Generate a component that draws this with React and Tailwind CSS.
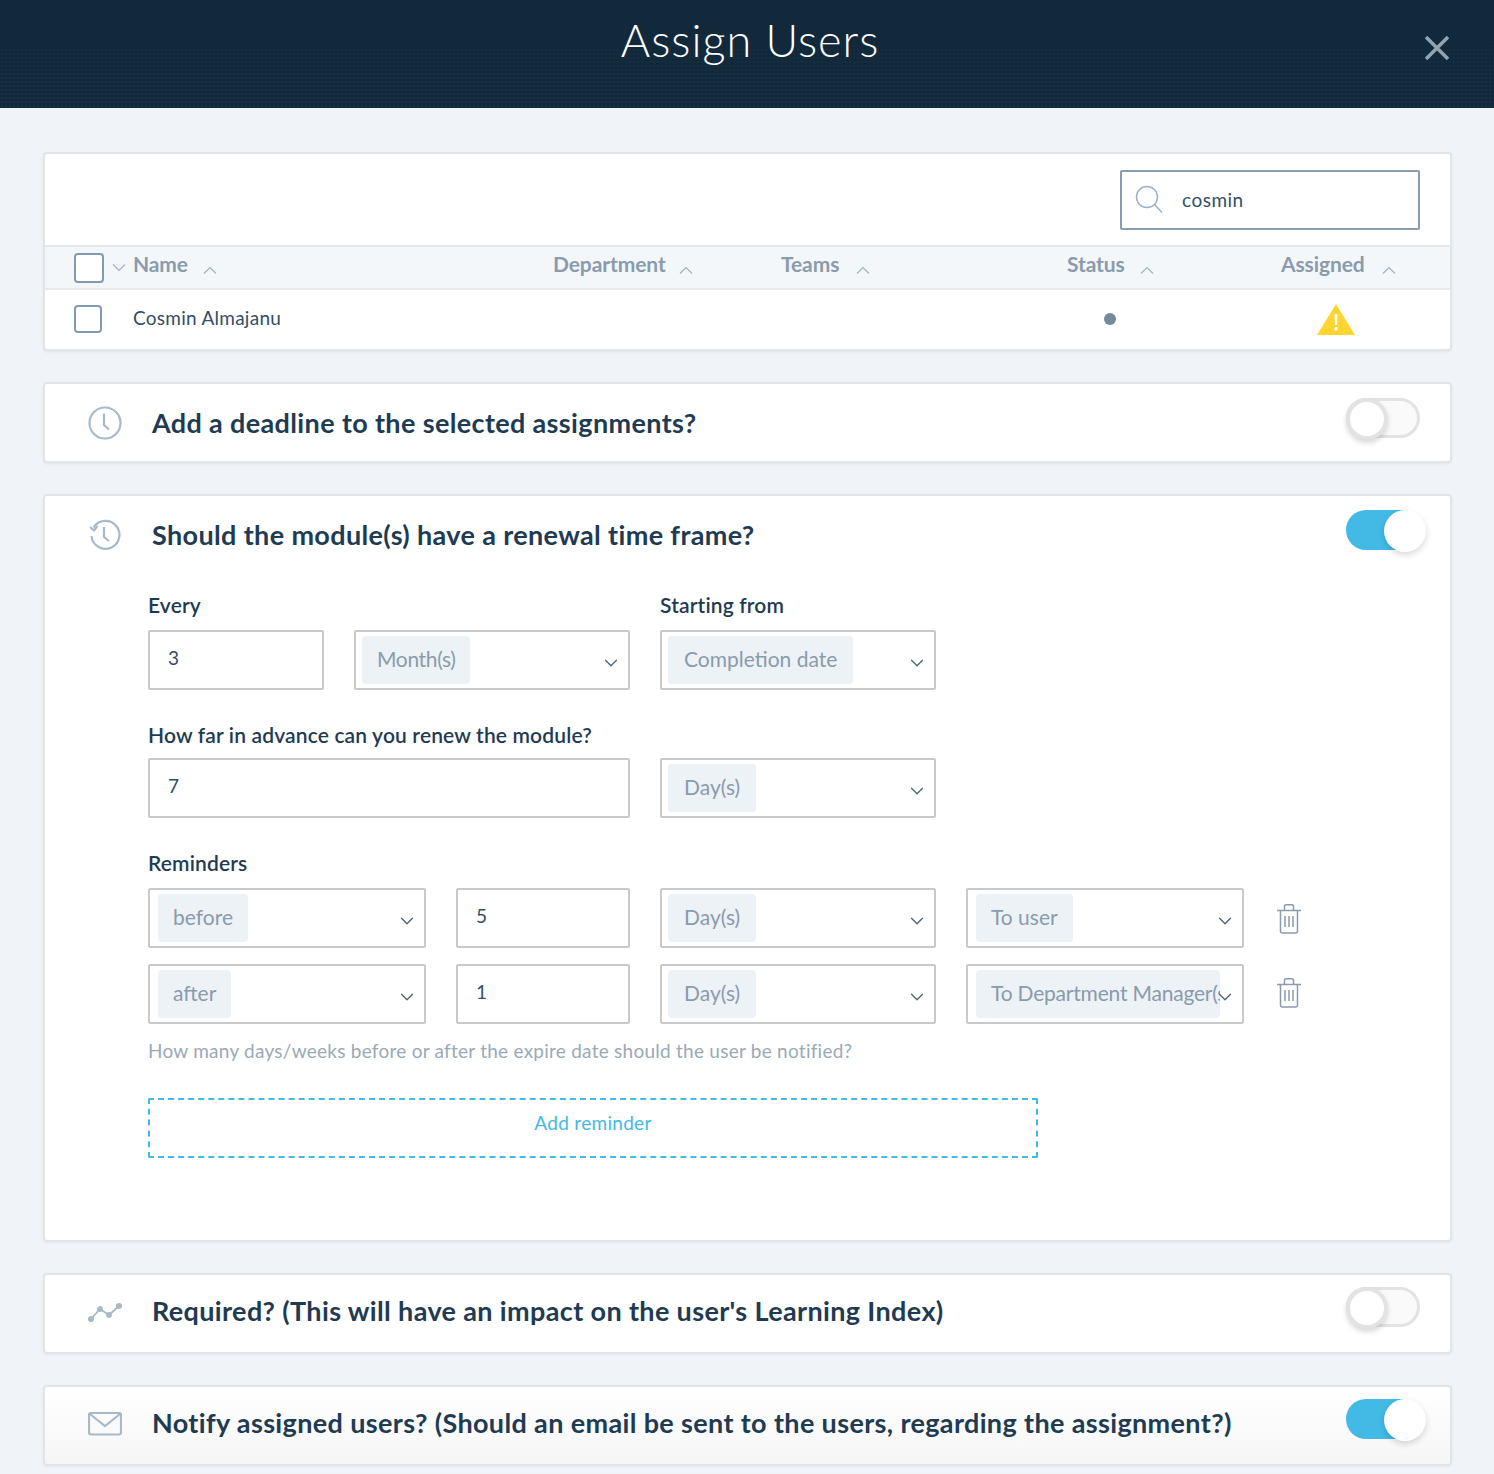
import { ChevronDown } from 'lucide-react'

const columns = [
  { label: 'Name', className: 'w-[420px]', caret: 'ml-[15px]' },
  { label: 'Department', className: 'w-[228px]', caret: 'ml-[13px]' },
  { label: 'Teams', className: 'w-[286px]', caret: 'ml-[17px]' },
  { label: 'Status', className: 'w-[214px]', caret: 'ml-[15px]' },
  { label: 'Assigned', className: '', caret: 'ml-[17px]' },
]

function Caret({ up, className }) {
  return (
    <svg viewBox="0 0 14 8" className={`h-2 w-[14px] text-[#9fb3c8] ${className}`} fill="none" stroke="currentColor" strokeWidth="1.200">
      <path d={up ? 'M1 7.500L7 1.500l6 6' : 'M1 .5l6 6 6-6'} />
    </svg>
  )
}

function SortHeader({ label, className, caret }) {
  return (
    <div className={`flex items-center ${className}`}>
      <span className="pb-[8px] font-bold text-[21px] leading-none tracking-[-0.1px] text-[#8a9bad]">{label}</span>
      <Caret up className={`mt-[5px] ${caret}`} />
    </div>
  )
}

function Toggle({ on }) {
  if (on) {
    return (
      <div className="relative h-10 w-[74px] rounded-full bg-[#43b9e6]">
        <div className="absolute -right-[6px] top-0 size-[42px] rounded-full bg-white shadow-[0_3px_6px_rgba(0,0,0,0.15)]" />
      </div>
    )
  }
  return (
    <div className="relative h-10 w-[74px] rounded-full border-[3px] border-[#e3e3e3] bg-[#fafafa]">
      <div className="absolute -left-[3px] -top-[3px] size-[42px] rounded-full border-[4px] border-[#e3e3e3] bg-white shadow-[0_3px_5px_rgba(0,0,0,0.15)]" />
    </div>
  )
}

function ClockIcon() {
  return (
    <svg viewBox="0 0 34 34" className="size-[34px] text-[#a9b9c8]" fill="none" stroke="currentColor" strokeWidth="2.200">
      <circle cx="17" cy="17" r="15.500" />
      <path d="M16 7.500V19l5 4.500" />
    </svg>
  )
}

function HistoryIcon() {
  return (
    <svg viewBox="0 0 34 34" className="size-[34px] text-[#a9b9c8]" fill="none" stroke="currentColor" strokeWidth="2.200">
      <path d="M5.500 9.500A14 14 0 1 1 3.500 18" />
      <path d="M2 9l4 3.500L9.500 8" />
      <path d="M16 9v10l5 4" />
    </svg>
  )
}

function TrendIcon() {
  return (
    <svg viewBox="0 0 34 20" className="h-5 w-[34px] text-[#a9b9c8]" fill="none" stroke="currentColor" strokeWidth="1.800">
      <path d="M3 17l9-10 9 6 10-9" />
      <circle cx="3" cy="17" r="2.200" fill="currentColor" />
      <circle cx="12" cy="7" r="2" fill="currentColor" />
      <circle cx="21" cy="13" r="2" fill="currentColor" />
      <circle cx="31" cy="4" r="2.200" fill="currentColor" />
    </svg>
  )
}

function MailIcon() {
  return (
    <svg viewBox="0 0 34 24" className="h-6 w-[34px] text-[#a9b9c8]" fill="none" stroke="currentColor" strokeWidth="2.200">
      <rect x="1" y="1" width="32" height="21.500" rx="2" />
      <path d="M2 2l15 12L32 2" />
    </svg>
  )
}

function TrashIcon({ className }) {
  return (
    <svg viewBox="0 0 24 30" className={`h-[30px] w-6 text-[#8a9bad] ${className}`} fill="none" stroke="currentColor" strokeWidth="1.500">
      <path d="M0 6.500h24" />
      <path d="M7.500 6.500V2A1.500 1.500 0 0 1 9 .8h6A1.500 1.500 0 0 1 16.500 2v4.500" />
      <path d="M3.500 7v20a2 2 0 0 0 2 2h13a2 2 0 0 0 2-2V7" />
      <path d="M8 12v11M12 12v11M16 12v11" />
    </svg>
  )
}

function Card({ className = '', children }) {
  return (
    <section className={`rounded-[4px] border-2 border-[#e2e4e6] bg-white shadow-[0_1px_3px_rgba(0,0,0,0.06)] ${className}`}>
      {children}
    </section>
  )
}

function ToggleCard({ icon, title, on, compact, className = '' }) {
  return (
    <Card className={`h-[81px] ${className}`}>
      <ToggleHead icon={icon} title={title} on={on} compact={compact} />
    </Card>
  )
}

function ToggleHead({ icon, title, on, compact }) {
  return (
    <div className={`flex items-center pl-[43px] pr-[30px] ${compact ? 'h-[71px]' : 'h-[76px]'}`}>
      <div className="mt-[2px] flex w-[34px] justify-center">{icon}</div>
      <h2 className="ml-[30px] flex-1 text-[27px] font-bold leading-none tracking-[0.36px] text-[#1f3b53]">{title}</h2>
      <div className="-mt-[8px]"><Toggle on={on} /></div>
    </div>
  )
}

function Field({ label }) {
  return <div className="text-[21px] font-semibold leading-none tracking-[0.15px] text-[#1f3b53]">{label}</div>
}

function TextBox({ value, className }) {
  return (
    <div className={`flex h-[60px] items-center rounded-[2px] border-2 border-[#c9c9c9] pl-[18px] text-[19px] text-[#334e68] ${className}`}>
      <span className="-mt-[4px]">{value}</span>
    </div>
  )
}

function Select({ value, className, tagClass = '' }) {
  return (
    <div className={`relative flex h-[60px] items-center rounded-[2px] border-2 border-[#c9c9c9] px-[6px] ${className}`}>
      <span className={`flex h-[48px] items-center rounded-[4px] bg-[#ecf2f6] pb-[2px] text-[21px] whitespace-nowrap text-[#8a9bad] ${tagClass}`}>
        {value}
      </span>
      <ChevronDown className="absolute right-[6px] top-[20px] size-[22px] text-[#52667a]" strokeWidth={1.500} />
    </div>
  )
}

export default function App() {
  return (
    <div className="h-[1474px] overflow-hidden bg-[#f0f4f8] font-['Lato',sans-serif]">
      <header className="relative flex h-[108px] justify-center bg-[#12293c]">
        <div className="absolute inset-0 bg-[radial-gradient(rgba(255,255,255,0.03)_1px,transparent_1px)] bg-[length:4px_4px] [mask-image:linear-gradient(to_bottom,transparent_25%,black_70%)]" />
        <h1 className="relative mt-[13px] ml-[6px] text-[45px] leading-[54px] font-light tracking-[1px] text-white">Assign Users</h1>
        <svg viewBox="0 0 24 24" className="absolute right-[45px] top-[36px] size-[24px] text-[#93a3b1]" fill="none" stroke="currentColor" strokeWidth="3.500">
          <path d="M1 1l22 22M23 1L1 23" />
        </svg>
      </header>

      <main className="flex w-[1495px] flex-col gap-[31px] px-[43px] pt-[44px]">
        <Card className="h-[199px]">
          <div className="flex h-[91px] justify-end pr-[30px] pt-[16px]">
            <div className="flex h-[60px] w-[300px] items-center rounded-[2px] border-2 border-[#8a9bad] pl-[13px]">
              <svg viewBox="0 0 28 30" className="h-[30px] w-[28px] text-[#9fb3c8]" fill="none" stroke="currentColor" strokeWidth="1.500">
                <circle cx="12" cy="12" r="10.500" />
                <path d="M19.500 19.500L27 27.500" />
              </svg>
              <span className="ml-[19px] text-[19px] tracking-[0.5px] text-[#334e68]">cosmin</span>
            </div>
          </div>
          <div className="flex h-[45px] items-center border-y-2 border-[#e6e8ea] bg-[#f4f7f9] pl-[29px]">
            <div className="size-[30px] rounded-[4px] border-2 border-[#829ab1] bg-white" />
            <Caret className="ml-[8px] mr-[7px]" />
            {columns.map((col) => (
              <SortHeader key={col.label} label={col.label} className={col.className} caret={col.caret} />
            ))}
          </div>
          <div className="flex h-[57px] items-center pl-[29px]">
            <div className="size-[28px] rounded-[4px] border-2 border-[#829ab1]" />
            <span className="ml-[31px] w-[971px] text-[19px] tracking-[0.27px] text-[#334e68]">Cosmin Almajanu</span>
            <div className="size-[12px] rounded-full bg-[#748a9a]" />
            <svg viewBox="0 0 38 32" className="ml-[201px] h-[32px] w-[38px]">
              <path d="M19 1l19 31H0z" fill="#ffd530" />
              <path d="M17.500 11h3l-.5 11h-2zM17.500 24h3v3.500h-3z" fill="#fff" />
            </svg>
          </div>
        </Card>

        <ToggleCard icon={<ClockIcon />} title="Add a deadline to the selected assignments?" />

        <Card className="h-[748px]">
          <ToggleHead icon={<HistoryIcon />} title="Should the module(s) have a renewal time frame?" on />
          <div className="pl-[103px] pt-[22px]">
            <div className="flex gap-[30px]">
              <div className="w-[482px]"><Field label="Every" /></div>
              <Field label="Starting from" />
            </div>
            <div className="mt-[15px] flex gap-[30px]">
              <TextBox value="3" className="w-[176px]" />
              <Select value="Month(s)" className="w-[276px]" tagClass="pl-[15px] pr-[14px] tracking-[-0.35px]" />
              <Select value="Completion date" className="w-[276px]" tagClass="px-[16px]" />
            </div>

            <div className="mt-[34px]"><Field label="How far in advance can you renew the module?" /></div>
            <div className="mt-[13px] flex gap-[30px]">
              <TextBox value="7" className="w-[482px]" />
              <Select value="Day(s)" className="w-[276px]" tagClass="px-[16px]" />
            </div>

            <div className="mt-[34px]"><Field label="Reminders" /></div>
            <div className="mt-[15px] flex items-center gap-[30px]">
              <Select value="before" className="w-[278px]" tagClass="ml-[2px] pl-[15px] pr-[15px]" />
              <TextBox value="5" className="w-[174px] pl-[17px]" />
              <Select value="Day(s)" className="w-[276px]" tagClass="px-[16px]" />
              <Select value="To user" className="w-[278px]" tagClass="ml-[2px] px-[15px]" />
              <TrashIcon className="ml-[3px] mt-[2px]" />
            </div>
            <div className="mt-[16px] flex items-center gap-[30px]">
              <Select value="after" className="w-[278px]" tagClass="ml-[2px] pl-[15px] pr-[15px]" />
              <TextBox value="1" className="w-[174px] pl-[17px]" />
              <Select value="Day(s)" className="w-[276px]" tagClass="px-[16px]" />
              <Select value="To Department Manager(s)" className="w-[278px]" tagClass="ml-[2px] block w-[244px] overflow-hidden px-[15px] leading-[46px] tracking-[-0.2px]" />
              <TrashIcon className="ml-[3px] -mt-[3px]" />
            </div>
            <p className="mt-[17px] text-[19px] leading-none tracking-[0.25px] text-[#9aa9b8]">
              How many days/weeks before or after the expire date should the user be notified?
            </p>
            <div className="mt-[38px] flex h-[60px] w-[890px] items-center justify-center rounded-[2px] border-2 border-dashed border-[#43b9e6] pb-[10px] text-[19px] tracking-[0.3px] text-[#43b9e6]">
              Add reminder
            </div>
          </div>
        </Card>

        <ToggleCard icon={<TrendIcon />} compact title="Required? (This will have an impact on the user's Learning Index)" />
        <ToggleCard
          icon={<MailIcon />}
          compact
          title="Notify assigned users? (Should an email be sent to the users, regarding the assignment?)"
          on
          className="bg-gradient-to-b from-white to-[#f6f6f6]"
        />
      </main>
    </div>
  )
}
